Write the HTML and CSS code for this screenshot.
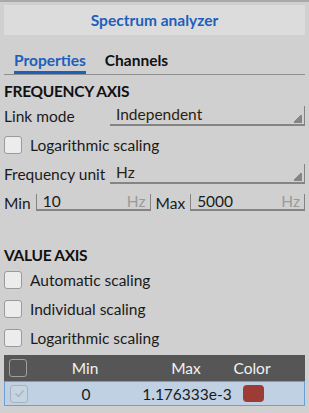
FILE: index.html
```html
<!DOCTYPE html>
<html lang="en">
<head>
    <meta charset="UTF-8">
    <title>Spectrum analyzer</title>
    <link rel="stylesheet" href="styles.css">
</head>
<body>

<div class="panel">
    <div class="title-bar">Spectrum analyzer</div>

    <div class="tabs">
        <span class="tab active">Properties</span>
        <span class="tab">Channels</span>
    </div>

    <h2>FREQUENCY AXIS</h2>
    <div class="row">
        <span class="label">Link mode</span>
        <div class="select">Independent</div>
    </div>
    <label class="check"><span class="box"></span>Logarithmic scaling</label>
    <div class="row">
        <span class="label">Frequency unit</span>
        <div class="select">Hz</div>
    </div>
    <div class="row range">
        <span class="short">Min</span>
        <div class="field"><span>10</span><span class="unit">Hz</span></div>
        <span class="short">Max</span>
        <div class="field"><span>5000</span><span class="unit">Hz</span></div>
    </div>

    <h2 class="second">VALUE AXIS</h2>
    <label class="check"><span class="box"></span>Automatic scaling</label>
    <label class="check"><span class="box"></span>Individual scaling</label>
    <label class="check"><span class="box"></span>Logarithmic scaling</label>

    <div class="table">
        <div class="thead">
            <span class="cell-check"><span class="box dark"></span></span>
            <span class="cell-min">Min</span>
            <span class="cell-max">Max</span>
            <span class="cell-color">Color</span>
        </div>
        <div class="trow">
            <span class="cell-check">
                <span class="box disabled">
                    <svg width="13" height="13" viewBox="0 0 13 13"><path d="M2.5 6.5 L5.5 9.5 L10.5 3.5" fill="none" stroke="#a8b2bc" stroke-width="1.3"/></svg>
                </span>
            </span>
            <span class="cell-min">0</span>
            <span class="cell-max">1.176333e-3</span>
            <span class="cell-color"><span class="swatch"></span></span>
        </div>
    </div>
</div>

</body>
</html>
```

FILE: styles.css
```css
* {
    box-sizing: border-box;
    margin: 0;
    padding: 0;
}

body {
    font-family: Lato, 'Open Sans', sans-serif;
    font-size: 15.5px;
    color: #1a1a1a;
    background-color: #d0d0d0;
    border-top: 2px solid #a9a9a9;
}

.panel {
    padding: 3px 4px 0 4px;
}

.title-bar {
    background-color: #dcdcdc;
    height: 30px;
    line-height: 30px;
    text-align: center;
    font-weight: bold;
    color: #1c5fbd;
}

.tabs {
    display: flex;
    gap: 19px;
    padding: 16px 0 0 10px;
    height: 40px;
    border-bottom: 1px solid #8e8e8e;
}

.tab {
    font-weight: bold;
    color: #111;
    height: 23px;
    line-height: 18px;
}

.tab.active {
    color: #1c5fbd;
    border-bottom: 3px solid #1c5fbd;
}

h2 {
    font-size: 15.5px;
    font-weight: bold;
    color: #111;
    margin-top: 6px;
    height: 20px;
    line-height: 20px;
    letter-spacing: -0.3px;
}

h2.second {
    margin-top: 28px;
}

.row {
    display: flex;
    align-items: center;
    height: 29px;
}

.label {
    width: 106px;
}

.select {
    flex: 1;
    height: 20px;
    line-height: 17px;
    padding-left: 6px;
    color: #2e1e0e;
    border-bottom: 2px solid #848484;
    border-right: 1px solid #848484;
    background: linear-gradient(135deg, transparent calc(100% - 7px), #858585 calc(100% - 7px)) no-repeat right 2px bottom 1px / 8px 8px;
}

.range {
    gap: 5px;
}

.short {
    flex: none;
}

.field {
    flex: 1;
    display: flex;
    justify-content: space-between;
    height: 17px;
    line-height: 15px;
    padding: 0 4px 0 6px;
    border: 1px solid #848484;
    border-top: none;
    border-bottom-width: 2px;
}

.field .unit {
    color: #9a9a9a;
}

.check {
    display: flex;
    align-items: center;
    gap: 8px;
    height: 29px;
}

.box {
    display: inline-block;
    width: 18px;
    height: 18px;
    border: 1px solid #9a9a9a;
    border-radius: 3px;
    background-color: #ececec;
}

.box.dark {
    background-color: #555;
    border-color: #a0a0a0;
}

.box.disabled {
    background-color: #c6d3e1;
    border-color: #a8b2bc;
    display: flex;
    align-items: center;
    justify-content: center;
}

.table {
    margin-top: 3px;
}

.thead,
.trow {
    display: flex;
    align-items: center;
}

.thead {
    background-color: #565656;
    color: #f2f2f2;
    height: 26px;
}

.trow {
    background-color: #c0d1e3;
    border: 1px solid #6a9fd8;
    height: 25px;
}

.cell-check {
    width: 36px;
    padding-left: 5px;
    display: flex;
}

.cell-min {
    width: 90px;
    display: flex;
    justify-content: center;
}

.cell-max {
    width: 112px;
    display: flex;
    justify-content: center;
}

.cell-color {
    width: 20px;
    display: flex;
    justify-content: center;
}

.swatch {
    flex: none;
    width: 21px;
    height: 17px;
    border-radius: 4px;
    background-color: #9d3b37;
}
```
